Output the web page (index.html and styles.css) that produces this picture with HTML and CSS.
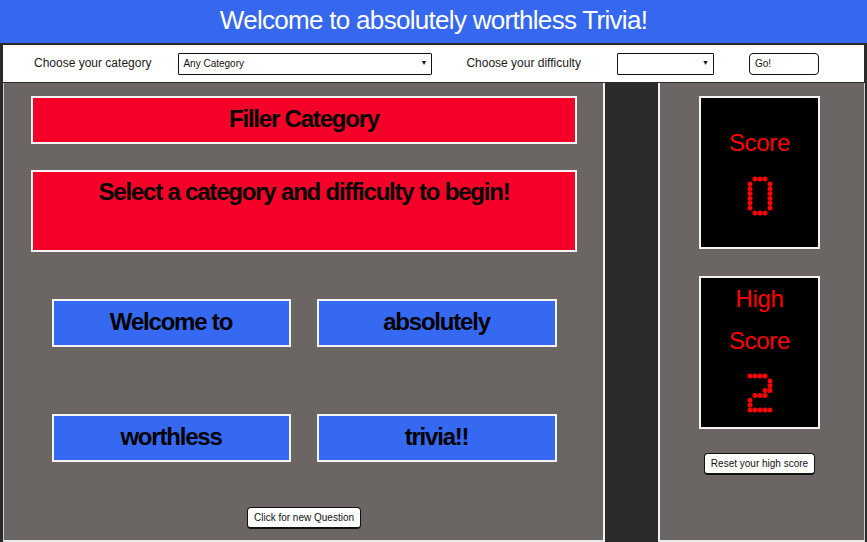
FILE: index.html
```html
<!DOCTYPE html>
<html lang="en">
<head>
<meta charset="utf-8">
<title>Trivia</title>
<link rel="stylesheet" href="styles.css">
</head>
<body>
<header class="title">Welcome to absolutely worthless Trivia!</header>
<nav class="controls">
  <label class="ctl-label lbl-cat" for="cat">Choose your category</label>
  <div class="select-wrap sel-cat">
    <select id="cat" class="select"><option>Any Category</option></select>
    <span class="arrow">&#9660;</span>
  </div>
  <label class="ctl-label lbl-diff" for="diff">Choose your difficulty</label>
  <div class="select-wrap sel-diff">
    <select id="diff" class="select"><option></option></select>
    <span class="arrow">&#9660;</span>
  </div>
  <button class="go">Go!</button>
</nav>
<main class="board">
  <section class="play">
    <div class="red-box category">Filler Category</div>
    <div class="red-box question">Select a category and difficulty to begin!</div>
    <div class="answers">
      <button class="answer">Welcome to</button>
      <button class="answer">absolutely</button>
      <button class="answer">worthless</button>
      <button class="answer">trivia!!</button>
    </div>
    <button class="small-btn new-q">Click for new Question</button>
  </section>
  <section class="scores">
    <div class="score-box score">
      <div class="score-label">Score</div>
      <svg class="digit" width="26" height="40" viewBox="0 0 26 40" aria-label="0">
        <g fill="#ff0000">
          <circle cx="8" cy="3" r="2.5"/><circle cx="13" cy="3" r="2.5"/><circle cx="18" cy="3" r="2.5"/>
          <circle cx="3" cy="7.9" r="2.5"/><circle cx="23" cy="7.9" r="2.5"/>
          <circle cx="3" cy="12.7" r="2.5"/><circle cx="23" cy="12.7" r="2.5"/>
          <circle cx="3" cy="17.6" r="2.5"/><circle cx="23" cy="17.6" r="2.5"/>
          <circle cx="3" cy="22.4" r="2.5"/><circle cx="23" cy="22.4" r="2.5"/>
          <circle cx="3" cy="27.3" r="2.5"/><circle cx="23" cy="27.3" r="2.5"/>
          <circle cx="3" cy="32.1" r="2.5"/><circle cx="23" cy="32.1" r="2.5"/>
          <circle cx="8" cy="37" r="2.5"/><circle cx="13" cy="37" r="2.5"/><circle cx="18" cy="37" r="2.5"/>
        </g>
      </svg>
    </div>
    <div class="score-box high">
      <div class="score-label">High<br>Score</div>
      <svg class="digit" width="26" height="40" viewBox="0 0 26 40" aria-label="2">
        <g fill="#ff0000">
          <circle cx="3" cy="3" r="2.5"/><circle cx="8" cy="3" r="2.5"/><circle cx="13" cy="3" r="2.5"/><circle cx="18" cy="3" r="2.5"/>
          <circle cx="23" cy="7.9" r="2.5"/>
          <circle cx="23" cy="12.7" r="2.5"/>
          <circle cx="18" cy="17.6" r="2.5"/><circle cx="23" cy="17.6" r="2.5"/>
          <circle cx="8" cy="22.4" r="2.5"/><circle cx="13" cy="22.4" r="2.5"/><circle cx="18" cy="22.4" r="2.5"/>
          <circle cx="3" cy="27.3" r="2.5"/>
          <circle cx="3" cy="32.1" r="2.5"/>
          <circle cx="3" cy="37" r="2.5"/><circle cx="8" cy="37" r="2.5"/><circle cx="13" cy="37" r="2.5"/><circle cx="18" cy="37" r="2.5"/><circle cx="23" cy="37" r="2.5"/>
        </g>
      </svg>
    </div>
    <button class="small-btn reset">Reset your high score</button>
  </section>
</main>
</body>
</html>
```

FILE: styles.css
```css
* { box-sizing: border-box; }

html, body {
  margin: 0;
  width: 867px;
  height: 542px;
  overflow: hidden;
}

body {
  background: #292a29;
  font-family: "Liberation Sans", Arial, sans-serif;
  color: #000;
}

.title {
  height: 43px;
  background: #3567ef;
  color: #fff;
  font-size: 26px;
  letter-spacing: -0.7px;
  line-height: 41px;
  text-align: center;
}

.controls {
  margin: 2px 3px 0;
  height: 37px;
  background: #fff;
  display: flex;
  align-items: center;
  padding-left: 31px;
}

.ctl-label {
  font-size: 12px;
  color: #1a1a1a;
  white-space: nowrap;
  margin-bottom: 1px;
}

.select-wrap {
  position: relative;
  height: 22px;
}

.sel-cat { margin-left: 27px; width: 254px; }
.lbl-diff { margin-left: 34px; }
.sel-diff { margin-left: 36px; width: 97px; }

.select {
  appearance: none;
  -webkit-appearance: none;
  width: 100%;
  height: 100%;
  border: 1.5px solid #111;
  border-radius: 1px;
  background: #fff;
  font-family: inherit;
  font-size: 10px;
  padding: 0 0 0 4px;
  color: #111;
}

.arrow {
  position: absolute;
  right: 5px;
  top: 6px;
  font-size: 7px;
  color: #111;
  pointer-events: none;
}

.go {
  margin-left: 35px;
  width: 70px;
  height: 22px;
  border: 1.5px solid #111;
  border-radius: 4px;
  background: #fff;
  font-family: inherit;
  font-size: 10px;
  text-align: left;
  padding: 0 5px;
  color: #111;
}

.board {
  display: flex;
  margin: 1px 2px 0 3px;
  height: 459px;
  gap: 53px;
}

.play {
  width: 602px;
  background: #6b6663;
  border-left: 1px solid #cfcfcf;
  border-right: 2px solid #f2f2f2;
  border-bottom: 2px solid #e8e8e8;
  padding: 13px 26px 0 27px;
  display: flex;
  flex-direction: column;
  align-items: center;
}

.red-box {
  width: 546px;
  background: #f50028;
  border: 2px solid #f4f4f4;
  font-size: 24px;
  font-weight: bold;
  letter-spacing: -1.2px;
  text-align: center;
}

.category {
  height: 48px;
  line-height: 41px;
}

.question {
  margin-top: 26px;
  height: 82px;
  line-height: 39px;
}

.answers {
  margin-top: 47px;
  display: grid;
  grid-template-columns: 239px 240px;
  column-gap: 26px;
  row-gap: 67px;
}

.answer {
  height: 48px;
  background: #3669f2;
  border: 2px solid #f4f4f4;
  font-family: inherit;
  font-size: 24px;
  font-weight: bold;
  letter-spacing: -1.2px;
  color: #000;
  padding: 0 0 2px;
}

.small-btn {
  height: 22px;
  background: #fff;
  border: 1.5px solid #111;
  border-bottom-width: 2px;
  border-radius: 4px;
  font-family: inherit;
  font-size: 10px;
  color: #111;
  padding: 0;
  white-space: nowrap;
}

.new-q {
  margin-top: 45px;
  width: 114px;
}

.scores {
  flex: 1;
  background: #6b6663;
  border-left: 2px solid #f2f2f2;
  border-right: 1px solid #cfcfcf;
  border-bottom: 2px solid #e8e8e8;
  padding: 13px 0 0 39px;
  display: flex;
  flex-direction: column;
}

.score-box {
  width: 121px;
  height: 153px;
  background: #000;
  border: 2px solid #f4f4f4;
  display: flex;
  flex-direction: column;
  align-items: center;
  color: #ff0000;
}

.score-label {
  font-size: 24px;
  letter-spacing: -0.3px;
  line-height: 42px;
  text-align: center;
}

.score { padding-top: 24px; }
.high { margin-top: 27px; padding-top: 0; }
.score .digit { margin-top: 12px; }

.digit {
  margin-top: 11px;
  display: block;
}

.reset {
  margin: 24px 0 0 5px;
  width: 111px;
}
```
